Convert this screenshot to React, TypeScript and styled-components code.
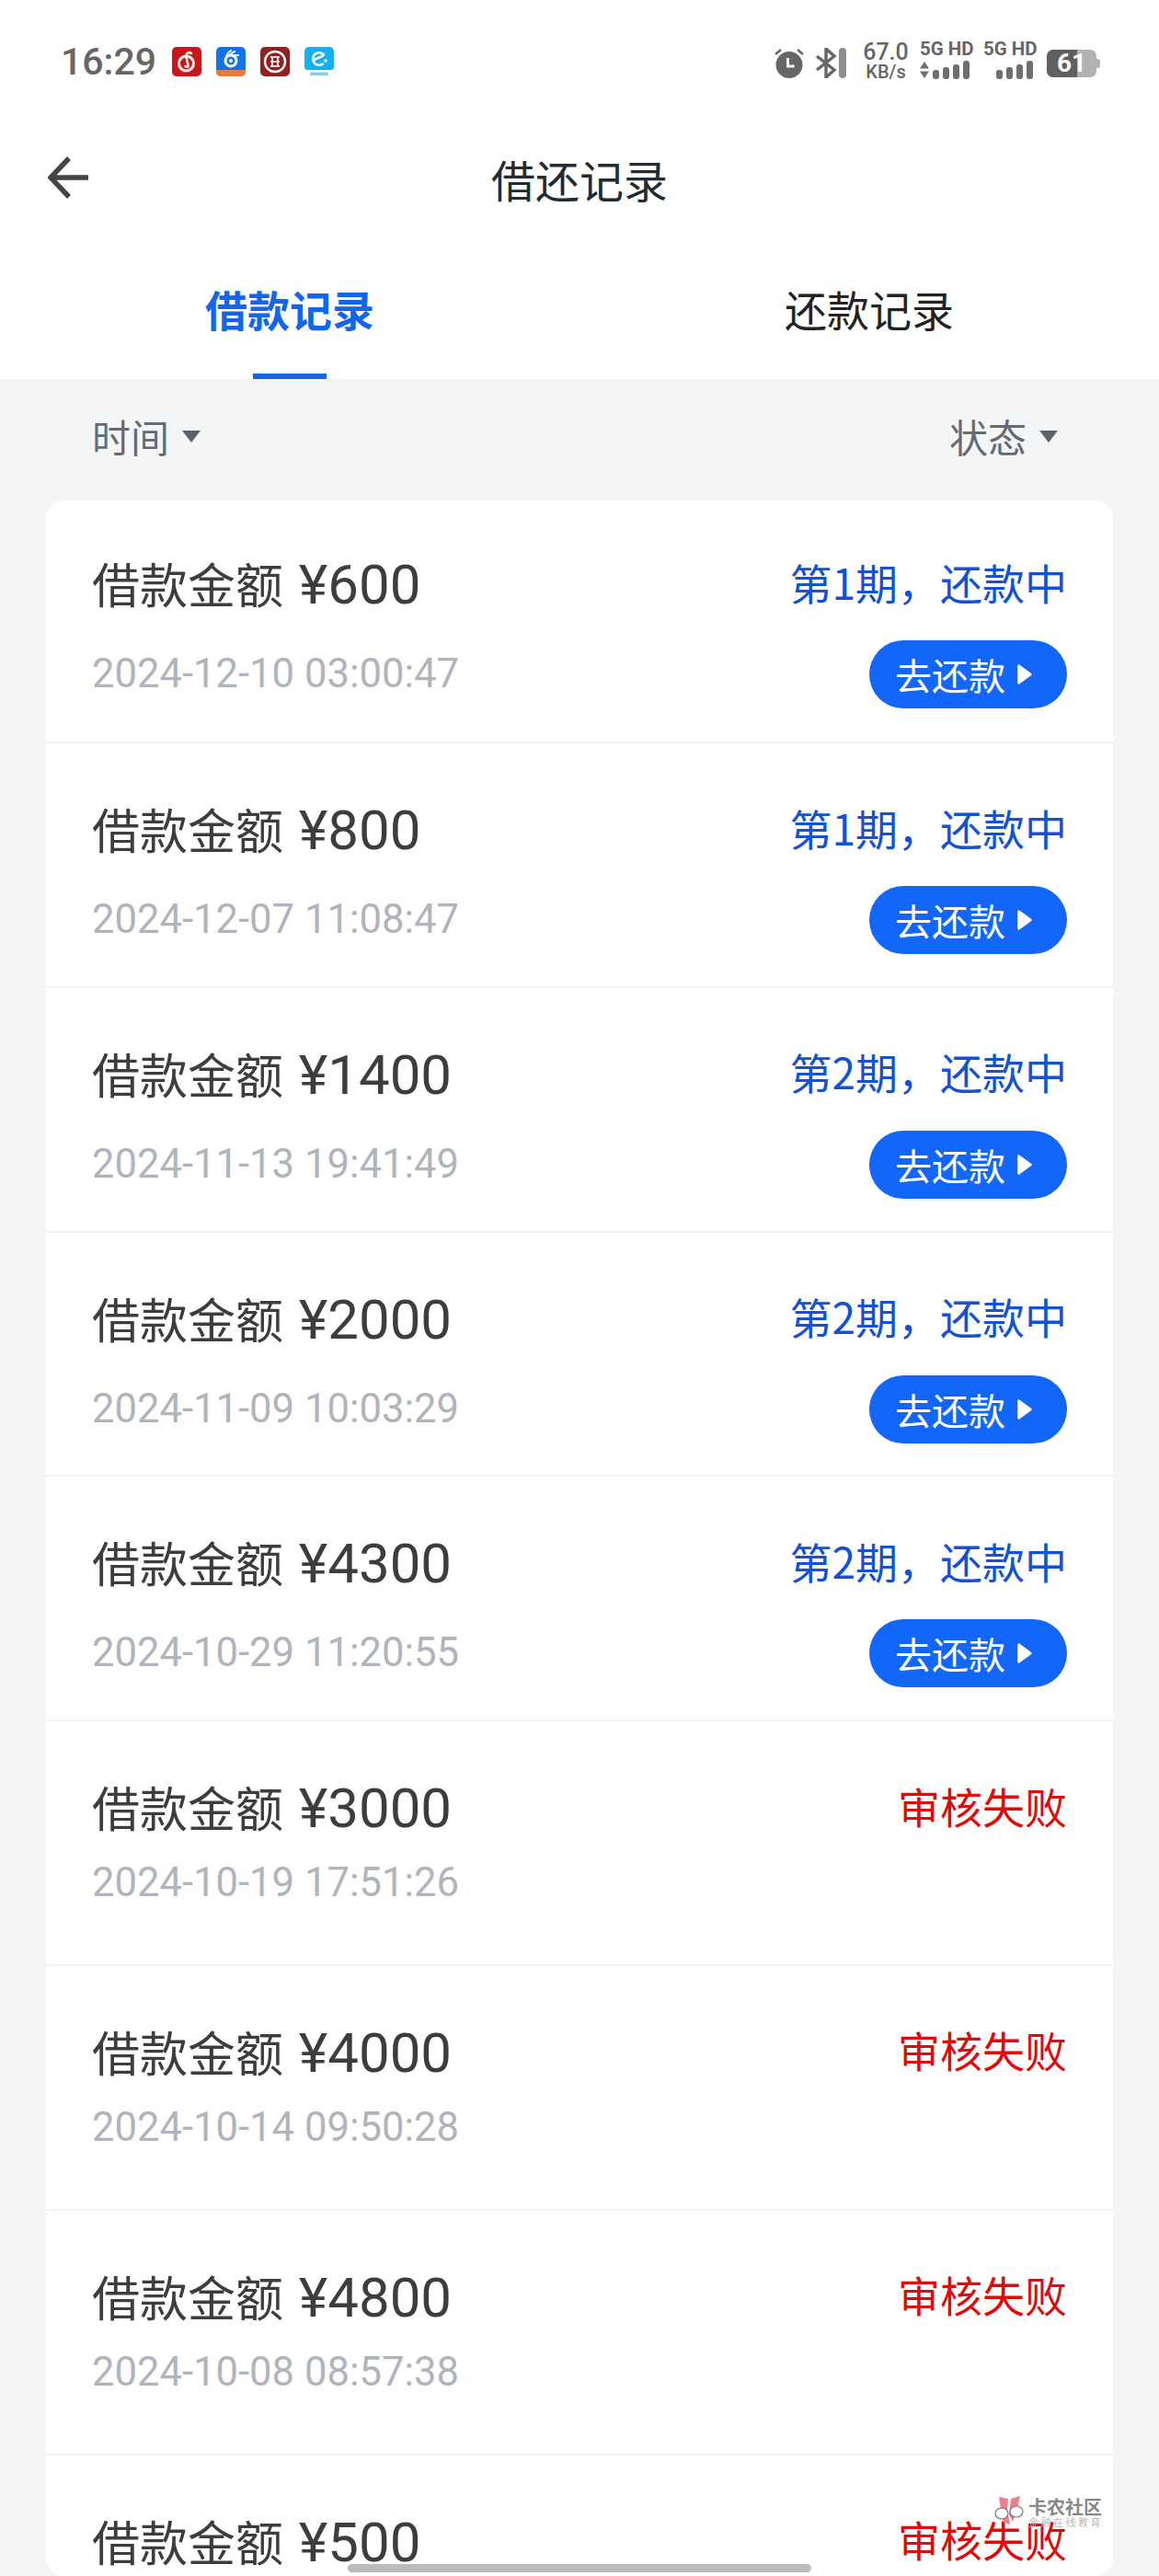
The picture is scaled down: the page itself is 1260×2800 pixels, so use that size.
import React from "react";
import styled, { createGlobalStyle } from "styled-components";

const records = [
  { amount: "600", date: "2024-12-10 03:00:47", period: 1 },
  { amount: "800", date: "2024-12-07 11:08:47", period: 1 },
  { amount: "1400", date: "2024-11-13 19:41:49", period: 2 },
  { amount: "2000", date: "2024-11-09 10:03:29", period: 2 },
  { amount: "4300", date: "2024-10-29 11:20:55", period: 2 },
  { amount: "3000", date: "2024-10-19 17:51:26" },
  { amount: "4000", date: "2024-10-14 09:50:28" },
  { amount: "4800", date: "2024-10-08 08:57:38" },
  { amount: "500", date: "2024-09-28 10:12:36" },
];

const SignalBars: React.FC<{ arrows?: boolean }> = ({ arrows }) => (
  <svg width="55" height="20" viewBox="0 0 55 20" fill="#6e6e6e">
    {arrows && (
      <>
        <path d="M0 8.5 L5 1 L10 8.5Z" />
        <path d="M0 11.5 L5 19 L10 11.5Z" />
      </>
    )}
    <rect x="14" y="10" width="7" height="10" rx="3" />
    <rect x="25" y="7" width="7" height="13" rx="3" />
    <rect x="36" y="4" width="7" height="16" rx="3" />
    <rect x="47" y="0" width="7" height="20" rx="3" />
  </svg>
);

const App: React.FC = () => {
  return (
    <Page>
      <GlobalStyle />
      <Top>
        <StatusBar>
          <StatusLeft>
            <Clock>16:29</Clock>
            <AppIcons>
              <svg width="32" height="32" viewBox="0 0 32 32">
                <rect width="32" height="32" rx="5" fill="#c8161d" />
                <circle cx="15.5" cy="18" r="8" fill="none" stroke="#fbe9e4" strokeWidth="3" />
                <path d="M21 7c-3-2-6 0-5.500 4l2 9c.5 2-2 2.500-3 1" fill="none" stroke="#fbe9e4" strokeWidth="2.600" strokeLinecap="round" />
              </svg>
              <svg width="32" height="32" viewBox="0 0 32 32">
                <rect width="32" height="32" rx="5" fill="#0f74ea" />
                <path d="M0 25h32v2a5 5 0 0 1-5 5H5a5 5 0 0 1-5-5z" fill="#ec7b3c" />
                <circle cx="16" cy="15" r="6" fill="none" stroke="#fff" strokeWidth="3" />
                <path d="M11 12c0-4 2-6 5-8M15 9c1-2 3-3 5-4M18 10c2-1 4-1 6-1" fill="none" stroke="#fff" strokeWidth="2" strokeLinecap="round" />
                <circle cx="16" cy="15" r="2" fill="#fff" />
              </svg>
              <svg width="32" height="32" viewBox="0 0 32 32">
                <rect width="32" height="32" rx="5" fill="#92201c" />
                <circle cx="16" cy="16" r="11" fill="none" stroke="#fff" strokeWidth="2.400" />
                <path d="M11 11h10M11 21h10M13 11v10M19 11v10M11 16h10" fill="none" stroke="#f3dcd8" strokeWidth="2" />
              </svg>
              <svg width="32" height="32" viewBox="0 0 32 32">
                <path d="M5 0h22a5 5 0 0 1 5 5v17a3 3 0 0 1-3 3H3a3 3 0 0 1-3-3V5a5 5 0 0 1 5-5z" fill="#12b0f5" />
                <path d="M21 8.500a6.800 6.800 0 1 0-1 10M10.500 14l9-4" fill="none" stroke="#fff" strokeWidth="2.600" strokeLinecap="round" />
                <circle cx="23" cy="15" r="1.700" fill="#fff" />
                <rect x="6" y="27.500" width="20" height="3.500" rx="1" fill="#7fcdf0" />
              </svg>
            </AppIcons>
          </StatusLeft>
          <StatusRight>
            <svg width="32" height="33" viewBox="0 0 32 33">
              <circle cx="16" cy="18.500" r="14.500" fill="#666" />
              <path d="M14.500 11v9h7" fill="none" stroke="#fff" strokeWidth="3" />
              <path d="M1 7l6-5M31 7l-6-5" fill="none" stroke="#666" strokeWidth="2.600" />
            </svg>
            <BluetoothGroup>
              <svg width="24" height="33" viewBox="0 0 24 33">
                <path d="M2 9l19 15-9 8V1l9 8L2 24" fill="none" stroke="#666" strokeWidth="3.400" />
              </svg>
              <GreyBar />
            </BluetoothGroup>
            <Speed>
              <SpeedValue>67.0</SpeedValue>
              <SpeedUnit>KB/s</SpeedUnit>
            </Speed>
            <Network>
              <NetLabel>5G HD</NetLabel>
              <SignalBars arrows />
            </Network>
            <Network>
              <NetLabel>5G HD</NetLabel>
              <SignalBars />
            </Network>
            <Battery>
              <BatteryBody>
                <BatteryFill $level={61} />
                <BatteryText>61</BatteryText>
              </BatteryBody>
              <BatteryCap />
            </Battery>
          </StatusRight>
        </StatusBar>

        <NavBar>
          <BackButton>
            <svg width="44" height="46" viewBox="0 0 44 46">
              <path d="M23 2L3 23l20 21M3 23h41" fill="none" stroke="#444" strokeWidth="5.500" />
            </svg>
          </BackButton>
          <Title>借还记录</Title>
        </NavBar>

        <Tabs>
          <Tab $active>借款记录</Tab>
          <Tab>还款记录</Tab>
        </Tabs>
      </Top>

      <Filters>
        <Filter>
          时间
          <Caret />
        </Filter>
        <Filter>
          状态
          <Caret />
        </Filter>
      </Filters>

      <Card>
        {records.map((r) => (
          <Row key={r.date} $hasAction={!!r.period}>
            <Amount>
              借款金额 <AmountValue>¥{r.amount}</AmountValue>
            </Amount>
            {r.period ? <Status>第{r.period}期，还款中</Status> : <Status $failed>审核失败</Status>}
            <DateText>{r.date}</DateText>
            {r.period && (
              <RepayButton>
                去还款
                <svg width="18" height="24" viewBox="0 0 18 24">
                  <path d="M2.500 2.500L15.500 12 2.500 21.500z" fill="#fff" stroke="#fff" strokeWidth="2.500" strokeLinejoin="round" />
                </svg>
              </RepayButton>
            )}
          </Row>
        ))}
      </Card>

      <Watermark>
        <svg width="34" height="33" viewBox="0 0 34 33">
          <path d="M6 1l10 2-1 12 3 16-7-2-3-14z" fill="#ee7f8a" />
          <path d="M19 3l10-3-3 13-5 15-4-8z" fill="#ee7f8a" />
          <ellipse cx="9" cy="19" rx="7" ry="6" fill="#fff" stroke="#777" strokeWidth="1.200" />
          <ellipse cx="25" cy="17" rx="7" ry="6" fill="#fff" stroke="#777" strokeWidth="1.200" />
        </svg>
        <WatermarkText>
          <WatermarkName>卡农社区</WatermarkName>
          <WatermarkSlogan>金融在线教育</WatermarkSlogan>
        </WatermarkText>
      </Watermark>
      <HomeBar />
    </Page>
  );
};

const GlobalStyle = createGlobalStyle`
  html, body {
    margin: 0;
    padding: 0;
    background: #f4f5f7;
  }
  * {
    box-sizing: border-box;
  }
`;

const Page = styled.div`
  position: relative;
  width: 1260px;
  height: 2800px;
  overflow: hidden;
  display: flex;
  flex-direction: column;
  background: #f4f5f7;
  font-family: "Noto Sans CJK SC", "Noto Sans", sans-serif;
`;

const Top = styled.div`
  background: #fff;
`;

const StatusBar = styled.div`
  height: 130px;
  padding: 47px 64px 0 66px;
  display: flex;
  justify-content: space-between;
  align-items: flex-start;
`;

const StatusLeft = styled.div`
  display: flex;
  align-items: center;
  gap: 17px;
  height: 40px;
`;

const Clock = styled.span`
  font-family: Roboto, sans-serif;
  font-size: 41px;
  font-weight: 500;
  line-height: 40px;
  color: #666;
`;

const AppIcons = styled.div`
  display: flex;
  gap: 16px;
`;

const StatusRight = styled.div`
  display: flex;
  align-items: flex-start;
  gap: 12px;
  padding-top: 5px;
`;

const BluetoothGroup = styled.div`
  display: flex;
  gap: 2px;
  margin-right: 6px;
`;

const GreyBar = styled.div`
  width: 8px;
  height: 33px;
  border-radius: 4px;
  background: #8e8e8e;
`;

const Speed = styled.div`
  width: 50px;
  margin-top: -7px;
  display: flex;
  flex-direction: column;
  align-items: center;
  font-family: Roboto, sans-serif;
  color: #666;
`;

const SpeedValue = styled.span`
  font-size: 25px;
  line-height: 24px;
  font-weight: 500;
`;

const SpeedUnit = styled.span`
  font-size: 20px;
  line-height: 19px;
  font-weight: 500;
`;

const Network = styled.div`
  width: 57px;
  margin-top: -8px;
  display: flex;
  flex-direction: column;
  gap: 3px;
`;

const NetLabel = styled.span`
  font-family: Roboto, sans-serif;
  font-size: 20.500px;
  line-height: 19px;
  font-weight: 700;
  color: #666;
  white-space: nowrap;
`;

const Battery = styled.div`
  display: flex;
  align-items: center;
  height: 30px;
  margin-top: 2px;
`;

const BatteryBody = styled.div`
  position: relative;
  width: 54px;
  height: 30px;
  border-radius: 7px;
  background: #b2b2b2;
  overflow: hidden;
`;

const BatteryFill = styled.div<{ $level: number }>`
  width: ${(p) => p.$level}%;
  height: 100%;
  background: #606060;
`;

const BatteryText = styled.span`
  position: absolute;
  top: 0;
  left: 0;
  width: 100%;
  text-align: center;
  font-family: Roboto, sans-serif;
  font-size: 28px;
  line-height: 30px;
  font-weight: 700;
  color: #fff;
`;

const BatteryCap = styled.div`
  width: 4px;
  height: 10px;
  border-radius: 0 3px 3px 0;
  background: #b2b2b2;
`;

const NavBar = styled.div`
  height: 130px;
  padding-bottom: 3px;
  display: flex;
  align-items: center;
  justify-content: center;
  position: relative;
`;

const BackButton = styled.div`
  position: absolute;
  left: 52px;
  top: 40px;
  width: 44px;
  height: 46px;
  line-height: 0;
`;

const Title = styled.h1`
  margin: 0;
  font-size: 48px;
  font-weight: 400;
  line-height: 60px;
  color: #222b33;
`;

const Tabs = styled.div`
  height: 152px;
  display: grid;
  grid-template-columns: 1fr 1fr;
`;

const Tab = styled.div<{ $active?: boolean }>`
  position: relative;
  padding-top: 45px;
  text-align: center;
  font-size: 46px;
  line-height: 60px;
  font-weight: ${(p) => (p.$active ? 700 : 400)};
  color: ${(p) => (p.$active ? "#1366e8" : "#222")};

  &::after {
    content: "";
    display: ${(p) => (p.$active ? "block" : "none")};
    position: absolute;
    left: 50%;
    bottom: 0;
    width: 80px;
    height: 6px;
    margin-left: -40px;
    background: #1366e8;
  }
`;

const Filters = styled.div`
  height: 132px;
  flex-shrink: 0;
  padding: 32px 110px 0 100px;
  display: flex;
  justify-content: space-between;
  align-items: flex-start;
`;

const Filter = styled.div`
  display: flex;
  align-items: center;
  gap: 14px;
  font-size: 42px;
  line-height: 60px;
  color: #666b73;
`;

const Caret = styled.span`
  width: 0;
  height: 0;
  border-left: 10.5px solid transparent;
  border-right: 10.5px solid transparent;
  border-top: 13px solid #5c626b;
`;

const Card = styled.div`
  flex: 1;
  min-height: 0;
  margin: 0 50px;
  background: #fff;
  border-radius: 20px;
  overflow: hidden;
`;

const Row = styled.div<{ $hasAction: boolean }>`
  height: 265.8px;
  padding: 63px 50px 0;
  border-bottom: 2px solid #f3f3f5;
  display: grid;
  grid-template-columns: 1fr auto;
  grid-auto-rows: min-content;
  align-items: center;
  row-gap: ${(p) => (p.$hasAction ? 30 : 31)}px;

  &:first-child {
    height: 264px;
    padding-top: 60px;
  }
`;

const Amount = styled.div`
  font-size: 52px;
  line-height: 60px;
  color: #3d3d3d;
  white-space: nowrap;
`;

const AmountValue = styled.span`
  font-family: Roboto, sans-serif;
  font-size: 60px;
  line-height: 60px;
  margin-left: 5px;
`;

const Status = styled.div<{ $failed?: boolean }>`
  justify-self: end;
  margin-top: -7px;
  font-size: 46px;
  line-height: 60px;
  color: ${(p) => (p.$failed ? "#e00a0a" : "#1352d0")};
  white-space: nowrap;
`;

const DateText = styled.div`
  font-family: Roboto, sans-serif;
  font-size: 43.6px;
  line-height: 40px;
  color: #b0b4bc;
`;

const RepayButton = styled.div`
  justify-self: end;
  width: 215px;
  height: 74px;
  padding-left: 28px;
  border-radius: 37px;
  background: #1267f8;
  display: flex;
  align-items: center;
  gap: 12px;
  font-size: 40px;
  color: #fff;
`;

const Watermark = styled.div`
  position: absolute;
  left: 1080px;
  top: 2713px;
  display: flex;
  gap: 4px;
`;

const WatermarkText = styled.div`
  display: flex;
  flex-direction: column;
  align-items: flex-start;
  padding-top: 2px;
`;

const WatermarkName = styled.span`
  font-size: 20px;
  line-height: 20px;
  font-weight: 700;
  color: #888;
  white-space: nowrap;
`;

const WatermarkSlogan = styled.span`
  font-size: 11px;
  line-height: 13px;
  letter-spacing: 2.500px;
  color: #bbb;
  white-space: nowrap;
`;

const HomeBar = styled.div`
  position: absolute;
  left: 378px;
  bottom: 4px;
  width: 504px;
  height: 9px;
  border-radius: 5px;
  background: #bbb;
`;

export default App;
